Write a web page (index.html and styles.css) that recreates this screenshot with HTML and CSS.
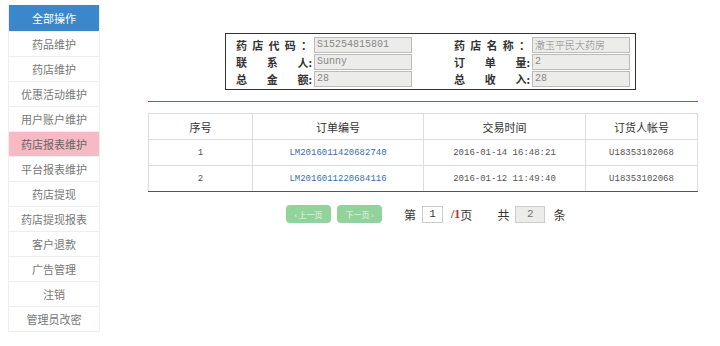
FILE: index.html
```html
<!DOCTYPE html>
<html lang="zh-CN">
<head>
    <meta charset="UTF-8">
    <title>药店报表维护</title>
    <link rel="stylesheet" href="styles.css">
</head>
<body>
    <!-- 左侧菜单 -->
    <ul class="menu">
        <li class="menu-title">全部操作</li>
        <li>药品维护</li>
        <li>药店维护</li>
        <li>优惠活动维护</li>
        <li>用户账户维护</li>
        <li class="active">药店报表维护</li>
        <li>平台报表维护</li>
        <li>药店提现</li>
        <li>药店提现报表</li>
        <li>客户退款</li>
        <li>广告管理</li>
        <li>注销</li>
        <li>管理员改密</li>
    </ul>

    <div class="main">
        <div class="info">
            <div class="info-row">
                <span class="lbl"><span>药</span><span>店</span><span>代</span><span>码</span><span>：</span></span>
                <input class="field" value="S15254815801" readonly>
                <span class="lbl lbl-right"><span>药</span><span>店</span><span>名</span><span>称</span><span>：</span></span>
                <input class="field field-cn" value="澈玉平民大药房" readonly>
            </div>
            <div class="info-row">
                <span class="lbl"><span>联</span><span>系</span><span>人:</span></span>
                <input class="field" value="Sunny" readonly>
                <span class="lbl lbl-right"><span>订</span><span>单</span><span>量:</span></span>
                <input class="field" value="2" readonly>
            </div>
            <div class="info-row">
                <span class="lbl"><span>总</span><span>金</span><span>额:</span></span>
                <input class="field" value="28" readonly>
                <span class="lbl lbl-right"><span>总</span><span>收</span><span>入:</span></span>
                <input class="field" value="28" readonly>
            </div>
        </div>

        <hr class="line">

        <table class="orders">
            <thead>
                <tr>
                    <th class="c1">序号</th>
                    <th class="c2">订单编号</th>
                    <th class="c3">交易时间</th>
                    <th class="c4">订货人帐号</th>
                </tr>
            </thead>
            <tbody>
                <tr>
                    <td>1</td>
                    <td><a href="#">LM2016011420682740</a></td>
                    <td>2016-01-14 16:48:21</td>
                    <td>U18353102068</td>
                </tr>
                <tr>
                    <td>2</td>
                    <td><a href="#">LM2016011220684116</a></td>
                    <td>2016-01-12 11:49:40</td>
                    <td>U18353102068</td>
                </tr>
            </tbody>
        </table>

        <div class="pager">
            <button class="pg-btn">&lsaquo; 上一页</button>
            <button class="pg-btn">下一页 &rsaquo;</button>
            <span class="pg-text pg-first">第</span>
            <input class="pg-input" value="1">
            <span class="pg-total">/1</span><span class="pg-text">页</span>
            <span class="pg-text pg-gap">共</span>
            <input class="pg-input pg-count" value="2" readonly>
            <span class="pg-text">条</span>
        </div>
    </div>
</body>
</html>
```

FILE: styles.css
```css
body {
    margin: 0;
    padding: 0;
    background-color: #fff;
    font-family: "Liberation Serif", "Noto Sans CJK SC", serif;
    display: flex;
    align-items: flex-start;
}

.menu {
    list-style: none;
    margin: 5px 0 0 8px;
    padding: 0;
    width: 90px;
    border: 1px solid #eee;
    border-top: none;
    font-family: "Noto Sans CJK SC", sans-serif;
    font-size: 11px;
    color: #777;
}

.menu li {
    height: 25px;
    line-height: 25px;
    text-align: center;
    border-top: 1px solid #eee;
    box-sizing: border-box;
}

.menu li.menu-title {
    height: 26px;
    line-height: 26px;
    background-color: #3b87cc;
    color: #fff;
    border-top: none;
}

.menu li.active {
    background-color: #f7b9c4;
    color: #666;
}

.main {
    width: 550px;
    margin-left: 48px;
    padding-top: 33px;
}

.info {
    width: 409px;
    margin-left: 77px;
    border: 1px solid #333;
    padding: 2px 0;
}

.info-row {
    display: flex;
    align-items: center;
    height: 17px;
    font-size: 11px;
    color: #333;
}

.lbl {
    display: flex;
    justify-content: space-between;
    width: 76px;
    margin-left: 10px;
    font-family: "Noto Sans CJK SC", serif;
    font-weight: bold;
    white-space: nowrap;
}

.lbl-right {
    margin-left: 42px;
}

.field {
    width: 98px;
    height: 16px;
    margin: 0 0 0 2px;
    padding: 0 2px;
    border: 1px solid #bbb;
    background-color: #ececea;
    color: #888;
    font-family: "Liberation Mono", monospace;
    font-size: 10px;
    box-sizing: border-box;
}

.field-cn {
    font-family: "Noto Sans CJK SC", sans-serif;
    font-weight: 300;
}

.line {
    margin: 11px 0 0 0;
    border: none;
    border-top: 1px solid #3e8a3e;
}

.orders {
    width: 550px;
    margin-top: 11px;
    border-collapse: collapse;
    border: 1px solid #555;
    font-family: "Liberation Mono", monospace;
    font-size: 9px;
    color: #555;
}

.orders th,
.orders td {
    height: 25px;
    padding: 0;
    text-align: center;
    border: 1px solid #ddd;
}

.orders th {
    font-family: "Noto Sans CJK SC", sans-serif;
    font-weight: normal;
    font-size: 11px;
    color: #333;
}

.orders th.c2,
.orders td:nth-child(2) {
    border-left: 1px solid #777;
}

.orders th.c4,
.orders td:nth-child(4) {
    border-left: 1px solid #888;
}

.orders tr:last-child td {
    border-bottom: 1px solid #555;
}

.c1 { width: 103px; }
.c2 { width: 170px; }
.c3 { width: 161px; }

.orders a {
    color: #3a6ea5;
    text-decoration: none;
}

.pager {
    display: flex;
    align-items: center;
    margin: 13px 0 0 138px;
    font-size: 12px;
    color: #333;
}

.pg-btn {
    width: 45px;
    height: 18px;
    padding: 0;
    margin-right: 6px;
    border: none;
    border-radius: 4px;
    background-color: #91d39a;
    color: #e6f5e8;
    font-family: "Noto Sans CJK SC", sans-serif;
    font-size: 8px;
}

.pg-text {
    font-family: "Noto Sans CJK SC", serif;
}

.pg-first {
    margin-left: 16px;
}

.pg-input {
    width: 21px;
    height: 17px;
    margin: 0 8px 0 6px;
    padding: 0;
    border: 1px solid #ccc;
    text-align: center;
    font-family: "Liberation Mono", monospace;
    font-size: 11px;
    color: #333;
    box-sizing: border-box;
}

.pg-count {
    width: 30px;
    background-color: #ececea;
    color: #777;
}

.pg-total {
    color: #c0312b;
    font-weight: bold;
}

.pg-gap {
    margin-left: 25px;
}
```
